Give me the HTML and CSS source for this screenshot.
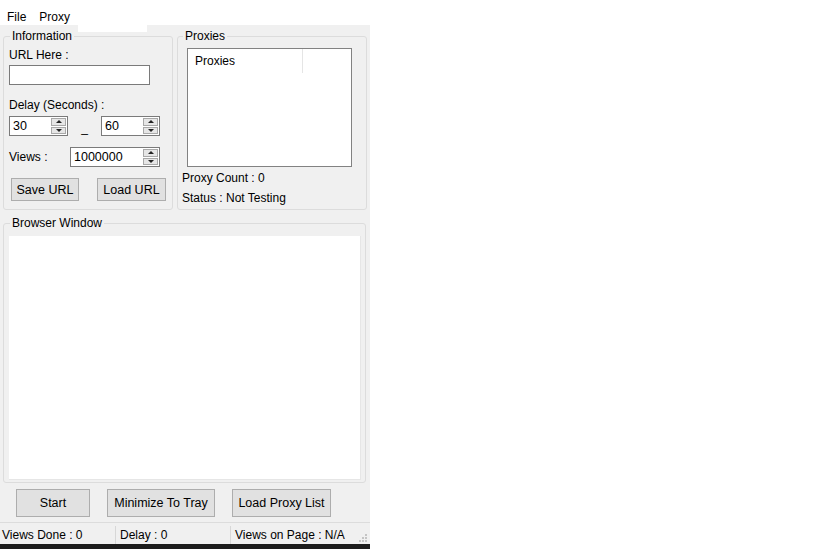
FILE: index.html
```html
<!DOCTYPE html>
<html lang="en">
  <head>
    <meta charset="utf-8" />
    <title>View Bot</title>
    <link rel="stylesheet" href="styles.css">
  </head>

  <body>
    <div class="window">
      <div class="menubar">
        <span class="menu-item">File</span>
        <span class="menu-item">Proxy</span>
        <span class="menu-tab"></span>
      </div>

      <div class="top-row">
        <fieldset class="group info">
          <legend>Information</legend>
          <div class="lbl">URL Here :</div>
          <div class="textbox url"></div>

          <div class="lbl delay-lbl">Delay (Seconds) :</div>
          <div class="row">
            <div class="spin small">
              <span class="value">30</span>
              <span class="arrows"><i class="up"></i><i class="down"></i></span>
            </div>
            <span class="dash">_</span>
            <div class="spin small">
              <span class="value">60</span>
              <span class="arrows"><i class="up"></i><i class="down"></i></span>
            </div>
          </div>

          <div class="row views">
            <span class="views-lbl">Views :</span>
            <div class="spin wide">
              <span class="value">1000000</span>
              <span class="arrows"><i class="up"></i><i class="down"></i></span>
            </div>
          </div>

          <div class="row buttons">
            <button class="btn save">Save URL</button>
            <button class="btn load">Load URL</button>
          </div>
        </fieldset>

        <fieldset class="group proxies">
          <legend>Proxies</legend>
          <div class="listview">
            <div class="lv-header">
              <span class="lv-col">Proxies</span>
            </div>
          </div>
          <div class="lbl count">Proxy Count : 0</div>
          <div class="lbl status">Status : Not Testing</div>
        </fieldset>
      </div>

      <fieldset class="group browser">
        <legend>Browser Window</legend>
        <div class="browser-view"></div>
      </fieldset>

      <div class="actions">
        <button class="btn big start">Start</button>
        <button class="btn big tray">Minimize To Tray</button>
        <button class="btn big proxy-list">Load Proxy List</button>
      </div>

      <div class="statusbar">
        <span class="cell first">Views Done : 0</span>
        <span class="cell">Delay : 0</span>
        <span class="cell last">Views on Page : N/A</span>
        <svg class="grip" width="8" height="8" viewBox="0 0 8 8">
          <rect x="6" y="0" width="2" height="2" fill="#c4c4c4" />
          <rect x="3" y="3" width="2" height="2" fill="#c4c4c4" />
          <rect x="6" y="3" width="2" height="2" fill="#c4c4c4" />
          <rect x="0" y="6" width="2" height="2" fill="#c4c4c4" />
          <rect x="3" y="6" width="2" height="2" fill="#c4c4c4" />
          <rect x="6" y="6" width="2" height="2" fill="#c4c4c4" />
        </svg>
      </div>
      <div class="taskbar"></div>
    </div>
  </body>
</html>
```

FILE: styles.css
```css
body {
  margin: 0;
  background-color: white;
  font-family: "Liberation Sans", Arial, sans-serif;
  font-size: 12px;
  color: #000;
}

.window {
  position: relative;
  width: 370px;
  height: 549px;
  background-color: #f0f0f0;
  display: flex;
  flex-direction: column;
}

/* menu strip */
.menubar {
  box-sizing: border-box;
  height: 25px;
  background-color: white;
  display: flex;
  align-items: flex-start;
  padding: 10px 0 0 7px;
  line-height: 14px;
  gap: 13px;
}

.menu-tab {
  position: absolute;
  left: 78px;
  top: 25px;
  width: 69px;
  height: 7px;
  background-color: white;
}

/* group boxes */
.group {
  margin: 0;
  min-width: 0;
  box-sizing: border-box;
  border: 1px solid #dcdcdc;
  border-radius: 3px;
}

.group legend {
  padding: 0 2px;
  margin-left: 1px;
  line-height: 14px;
}

.top-row {
  display: flex;
  gap: 4px;
  padding-left: 3px;
  margin-top: 4px;
}

.info {
  width: 170px;
  height: 181px;
  padding: 5px 5px 0 5px;
}

.proxies {
  width: 190px;
  height: 181px;
  padding: 5px 4px 0 4px;
}

.lbl {
  line-height: 14px;
}

.textbox,
.spin {
  box-sizing: border-box;
  height: 20px;
  border: 1px solid #7a7a7a;
  background-color: white;
}

.url {
  width: 141px;
  margin-top: 3px;
}

.delay-lbl {
  margin-top: 13px;
}

.row {
  display: flex;
  align-items: center;
  margin-top: 4px;
}

.spin {
  display: flex;
}

.spin .value {
  flex: 1;
  padding-left: 3px;
  line-height: 18px;
  font-size: 12.5px;
}

.spin .arrows {
  width: 16px;
  display: flex;
  flex-direction: column;
  gap: 1px;
  padding: 1px 1px 1px 0;
  box-sizing: border-box;
}

.spin .arrows i {
  flex: 1;
  display: flex;
  justify-content: center;
  align-items: center;
  background-color: #e6e6e6;
  border: 1px solid #a8a8a8;
}

.spin .arrows i::after {
  content: "";
  border-left: 3px solid transparent;
  border-right: 3px solid transparent;
}

.spin .arrows .up::after {
  border-bottom: 3px solid #222;
}

.spin .arrows .down::after {
  border-top: 3px solid #222;
}

.small {
  width: 59px;
}

.dash {
  width: 33px;
  text-align: center;
  line-height: 14px;
  padding-top: 4px;
}

.views {
  margin-top: 11px;
}

.views-lbl {
  width: 61px;
}

.wide {
  width: 90px;
}

.buttons {
  margin-top: 11px;
  padding-left: 2px;
}

.btn {
  box-sizing: border-box;
  font-family: "Liberation Sans", Arial, sans-serif;
  font-size: 12.5px;
  color: #000;
  background-color: #e1e1e1;
  border: 1px solid #adadad;
  padding: 0;
}

.save {
  width: 68px;
  height: 23px;
}

.load {
  width: 69px;
  height: 23px;
  margin-left: 18px;
}

/* proxy list */
.listview {
  box-sizing: border-box;
  width: 165px;
  height: 119px;
  margin-left: 5px;
  border: 1px solid #828282;
  background-color: white;
}

.lv-header {
  display: flex;
  height: 24px;
}

.lv-col {
  width: 115px;
  box-sizing: border-box;
  padding-left: 7px;
  line-height: 24px;
  border-right: 1px solid #e5e5e5;
}

.count {
  margin-top: 4px;
}

.status {
  margin-top: 6px;
}

/* browser panel */
.browser {
  width: 363px;
  height: 267px;
  margin: 6px 0 0 3px;
  padding: 6px 4px 2px 5px;
}

.browser-view {
  height: 244px;
  background-color: white;
  border-right: 1px solid #e6e6e6;
  border-bottom: 1px solid #e6e6e6;
  box-sizing: border-box;
}

.actions {
  display: flex;
  gap: 17px;
  padding-left: 16px;
  margin-top: 6px;
}

.big {
  height: 28px;
}

.start {
  width: 74px;
}

.tray {
  width: 108px;
}

.proxy-list {
  width: 99px;
}

/* status strip */
.statusbar {
  position: relative;
  display: flex;
  height: 22px;
  margin-top: 5px;
  padding-top: 3px;
  border-top: 1px solid #dcdcdc;
  box-sizing: border-box;
  align-items: center;
}

.cell {
  width: 115px;
  box-sizing: border-box;
  padding-left: 4px;
  line-height: 18px;
  border-left: 1px solid #d7d7d7;
}

.cell.first {
  padding-left: 2px;
  border-left: none;
}

.cell.last {
  width: auto;
}

.grip {
  position: absolute;
  right: 3px;
  bottom: 2px;
}

.taskbar {
  height: 5px;
  background-color: #1c1c1c;
}
```
